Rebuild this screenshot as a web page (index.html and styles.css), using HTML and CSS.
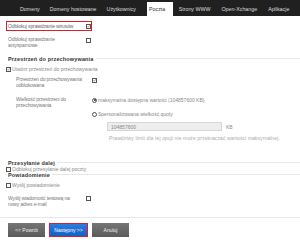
FILE: index.html
```html
<html>
<head>
<title>Poczta</title>
<link rel="stylesheet" href="styles.css">
</head>
<body>

<div class="nav">
	<div class="tab">Domeny</div>
	<div class="tab">Domeny hostowane</div>
	<div class="tab">Użytkownicy</div>
	<div class="tab active">Poczta</div>
	<div class="tab">Strony WWW</div>
	<div class="tab">Open-Xchange</div>
	<div class="tab">Aplikacje</div>
</div>

<div class="content">

	<div class="row hl">
		<div class="lbl">Odblokuj sprawdzanie wirusów</div>
		<span class="cb on"><svg viewBox="0 0 10 10"><path d="M2 5 L4.3 7.5 L8.5 1.5" /></svg></span>
	</div>

	<div class="row top second">
		<div class="lbl">Odblokuj sprawdzanie<br>antyspamowe</div>
		<span class="cb drop"></span>
	</div>

	<div class="legend">Przestrzeń do przechowywania</div>

	<div class="line-check first">
		<span class="cb on"><svg viewBox="0 0 10 10"><path d="M2 5 L4.3 7.5 L8.5 1.5" /></svg></span>
		<span>Utwórz przestrzeń do przechowywania</span>
	</div>

	<div class="sub">
		<div class="row top">
			<div class="lbl">Przestrzeń do przechowywania<br>odblokowana</div>
			<span class="cb on drop"><svg viewBox="0 0 10 10"><path d="M2 5 L4.3 7.5 L8.5 1.5" /></svg></span>
		</div>

		<div class="row top size">
			<div class="lbl">Wielkość przestrzeni do<br>przechowywania</div>
			<div class="opts">
				<div class="opt"><span class="rb on"></span>maksymalna dostępna wartość (104857600 KB)</div>
				<div class="opt second-opt"><span class="rb"></span>Spersonalizowana wielkość quoty</div>
				<div class="quota">
					<div class="field">104857600</div>
					<span>KB</span>
				</div>
				<div class="note">Prawdziwy limit dla tej opcji nie może przekraczać wartości maksymalnej.</div>
			</div>
		</div>
	</div>

	<div class="legend fwd">Przesyłanie dalej</div>
	<div class="line-check">
		<span class="cb"></span>
		<span>Odblokuj przesyłanie dalej poczty</span>
	</div>

	<div class="legend notif">Powiadomienie</div>
	<div class="line-check notify">
		<span class="cb"></span>
		<span>Wyślij powiadomienie</span>
	</div>

	<div class="row top test">
		<div class="lbl">Wyślij wiadomość testową na<br>nowy adres e-mail</div>
		<span class="cb test-cb"></span>
	</div>

</div>

<div class="bottom">
	<div class="btn">&lt;&lt; Powrót</div>
	<div class="btn next">Następny &gt;&gt;</div>
	<div class="btn">Anuluj</div>
</div>

</body>
</html>
```

FILE: styles.css
```css
body{
	margin: 0;
	background: #fff;
	font-family: "Liberation Sans", Arial, sans-serif;
	font-size: 5px;
	color: #777;
}

.nav{
	display: flex;
	align-items: flex-end;
	height: 16px;
	background: #202020;
	padding-left: 15px;
}

.tab{
	height: 14px;
	line-height: 14px;
	padding: 0 5px;
	color: #ddd;
	font-size: 5.3px;
	white-space: nowrap;
}

.tab.active{
	background: #fff;
	color: #333;
	margin-left: 6px;
	padding: 0 8px 0 2px;
}

.tab.active ~ .tab{
	padding: 0 5.5px;
}

.content{
	padding: 5px 0 0 6px;
}

.row{
	display: flex;
	align-items: center;
	padding-left: 2px;
	line-height: 6px;
}

.row.top{
	align-items: flex-start;
}

.lbl{
	width: 78px;
	letter-spacing: -0.12px;
}

.hl{
	box-sizing: border-box;
	width: 86px;
	height: 10px;
	border: 1px solid #d8202a;
	padding-left: 1px;
	color: #666;
}

.second{
	margin-top: 5px;
}

.cb{
	box-sizing: border-box;
	display: inline-block;
	width: 5px;
	height: 5px;
	border: 0.7px solid #555;
	background: #fff;
	flex: none;
}

.cb svg{
	display: block;
	width: 100%;
	height: 100%;
}

.cb path{
	fill: none;
	stroke: #444;
	stroke-width: 1.8;
}

.drop{
	margin-top: 2px;
}

.legend{
	display: flex;
	align-items: center;
	height: 8px;
	margin-top: 7px;
	padding-left: 2px;
	font-size: 5.5px;
	font-weight: bold;
	color: #333;
	letter-spacing: 0.15px;
}

.legend:after{
	content: "";
	flex: 1;
	height: 1px;
	margin: -1px 0 0 2px;
	background: #e6e6e6;
}

.line-check{
	display: flex;
	align-items: center;
	height: 6px;
	color: #888;
}

.line-check .cb{
	margin-right: 1px;
}

.first{
	margin-top: 3px;
}

.sub{
	padding-left: 8px;
}

.sub .row{
	margin-top: 4px;
}

.sub .lbl{
	width: 76px;
}

.sub .size{
	margin-top: 8px;
}

.opts{
	padding-top: 1px;
}

.opt{
	display: flex;
	align-items: center;
	height: 6px;
	color: #888;
}

.second-opt{
	margin-top: 8px;
}

.rb{
	box-sizing: border-box;
	display: inline-block;
	width: 5px;
	height: 5px;
	border: 0.7px solid #555;
	border-radius: 50%;
	margin-right: 1px;
	background: #fff;
	position: relative;
}

.rb.on:after{
	content: "";
	position: absolute;
	left: 0.9px;
	top: 0.9px;
	width: 1.8px;
	height: 1.8px;
	border-radius: 50%;
	background: #333;
}

.quota{
	display: flex;
	align-items: center;
	margin: 5px 0 0 15px;
	color: #888;
}

.field{
	box-sizing: border-box;
	width: 115px;
	height: 9px;
	line-height: 8px;
	padding-left: 3px;
	background: #eee;
	border: 0.5px solid #d6d6d6;
	margin-right: 4px;
	color: #888;
}

.note{
	margin: 4px 0 0 17px;
	color: #aaa;
	line-height: 6px;
	letter-spacing: 0.12px;
}

.fwd{
	margin-top: 19px;
	height: 6px;
}

.notif{
	margin-top: 0;
	height: 6px;
}

.notify{
	margin-top: 4px;
}

.test{
	margin-top: 7px;
}

.test-cb{
	margin-top: 1px;
}

.bottom{
	display: flex;
	gap: 4px;
	margin-top: 10px;
	padding: 5px 0 0 8px;
	border-top: 1px solid #e6e6e6;
}

.btn{
	box-sizing: border-box;
	width: 37px;
	height: 14px;
	line-height: 14px;
	text-align: center;
	color: #eee;
	background: linear-gradient(#757575, #5a5a5a);
}

.btn.next{
	width: 39px;
	line-height: 12px;
	border: 1px solid #d8202a;
	background: linear-gradient(#2a7de0, #1560c4);
	color: #fff;
}
```
